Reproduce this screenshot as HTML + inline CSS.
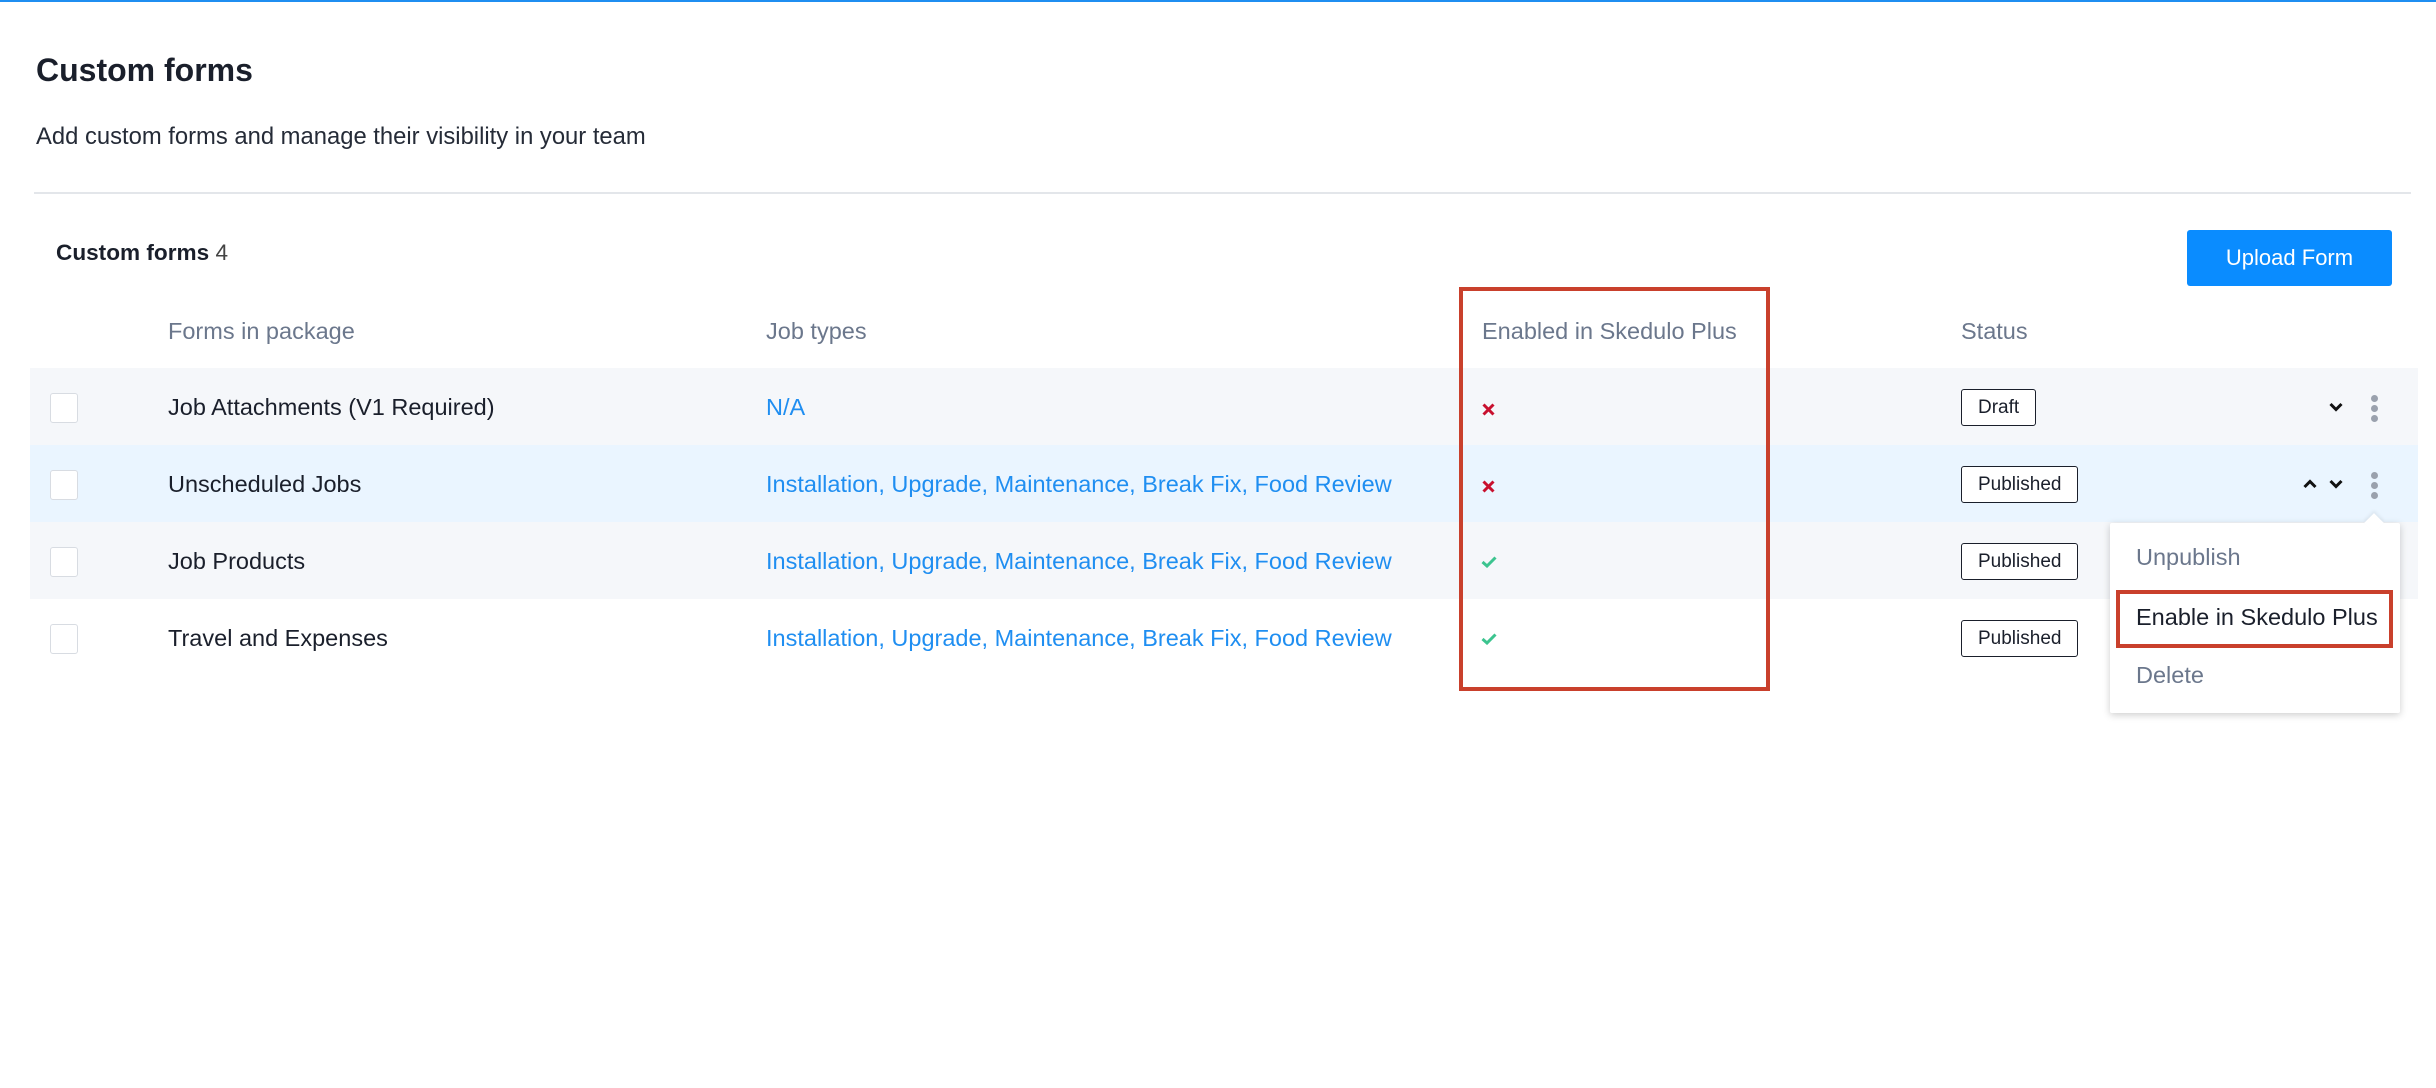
<!DOCTYPE html>
<html><head><meta charset="utf-8"><style>
*{margin:0;padding:0;box-sizing:border-box}
body{width:2436px;height:1088px;background:#fff;font-family:"Liberation Sans",sans-serif;position:relative;overflow:hidden;color:#1a1f2b}
.a{position:absolute;white-space:nowrap}
.row{position:absolute;left:30px;width:2388px;height:77px}
.cb{position:absolute;left:50px;width:28px;height:30px;border:1px solid #d8dce2;border-radius:3px;background:#fff}
.name{position:absolute;left:168px;font-size:23.5px;color:#1a1f2b}
.jt{position:absolute;left:766px;font-size:23.5px;color:#1f8ef1}
.hd{font-size:23.5px;color:#6b778c}
.badge{position:absolute;left:1961px;height:37px;border:1.5px solid #1a1f2b;border-radius:3px;font-size:19px;line-height:36px;padding:0 16px;background:#fff}
.dot{position:absolute;width:7px;height:7px;border-radius:50%;background:#9aa1ad}
</style></head><body>
<div class="a" style="left:0;top:0;width:2436px;height:2px;background:#1f8ef1"></div>
<div class="a" style="left:36px;top:52px;font-size:32px;font-weight:bold">Custom forms</div>
<div class="a" style="left:36px;top:123px;font-size:23.8px;color:#252b37">Add custom forms and manage their visibility in your team</div>
<div class="a" style="left:34px;top:192px;width:2377px;height:2px;background:#e3e6ea"></div>
<div class="a" style="left:56px;top:240px;font-size:22.6px"><b>Custom forms</b> <span style="color:#444">4</span></div>
<div class="a" style="left:2187px;top:230px;width:205px;height:56px;background:#0a8cff;border-radius:3px;color:#fff;font-size:22px;text-align:center;line-height:56px">Upload Form</div>
<div class="a hd" style="left:168px;top:318px">Forms in package</div>
<div class="a hd" style="left:766px;top:318px">Job types</div>
<div class="a hd" style="left:1482px;top:318px">Enabled in Skedulo Plus</div>
<div class="a hd" style="left:1961px;top:318px">Status</div>

<div class="row" style="top:368px;background:#f5f7fa"></div>
<div class="row" style="top:445px;background:#eaf5ff"></div>
<div class="row" style="top:522px;background:#f5f7fa"></div>

<div class="cb" style="top:393px"></div><div class="cb" style="top:470px"></div><div class="cb" style="top:547px"></div><div class="cb" style="top:624px"></div>
<div class="a name" style="top:394px">Job Attachments (V1 Required)</div>
<div class="a name" style="top:471px">Unscheduled Jobs</div>
<div class="a name" style="top:548px">Job Products</div>
<div class="a name" style="top:625px">Travel and Expenses</div>
<div class="a jt" style="top:394px">N/A</div>
<div class="a jt" style="top:471px">Installation, Upgrade, Maintenance, Break Fix, Food Review</div>
<div class="a jt" style="top:548px">Installation, Upgrade, Maintenance, Break Fix, Food Review</div>
<div class="a jt" style="top:625px">Installation, Upgrade, Maintenance, Break Fix, Food Review</div>

<svg class="a" style="left:1482px;top:403px" width="13" height="13"><path d="M1.5 1.5L11.5 11.5M11.5 1.5L1.5 11.5" stroke="#c8102e" stroke-width="3"/></svg>
<svg class="a" style="left:1482px;top:480px" width="13" height="13"><path d="M1.5 1.5L11.5 11.5M11.5 1.5L1.5 11.5" stroke="#c8102e" stroke-width="3"/></svg>
<svg class="a" style="left:1481px;top:556px" width="16" height="12"><path d="M1.5 6L6 10L14.5 1.5" stroke="#3cc48f" stroke-width="3" fill="none"/></svg>
<svg class="a" style="left:1481px;top:633px" width="16" height="12"><path d="M1.5 6L6 10L14.5 1.5" stroke="#3cc48f" stroke-width="3" fill="none"/></svg>

<div class="badge" style="top:389px">Draft</div>
<div class="badge" style="top:466px">Published</div>
<div class="badge" style="top:543px">Published</div>
<div class="badge" style="top:620px">Published</div>

<svg class="a" style="left:2329px;top:402px" width="14" height="10"><path d="M1.5 2L7 7.5L12.5 2" stroke="#111" stroke-width="3" fill="none"/></svg>
<svg class="a" style="left:2329px;top:479px" width="14" height="10"><path d="M1.5 2L7 7.5L12.5 2" stroke="#111" stroke-width="3" fill="none"/></svg>
<svg class="a" style="left:2303px;top:479px" width="14" height="10"><path d="M1.5 8L7 2.5L12.5 8" stroke="#111" stroke-width="3" fill="none"/></svg>
<div class="dot" style="left:2371px;top:395px"></div><div class="dot" style="left:2371px;top:405px"></div><div class="dot" style="left:2371px;top:415px"></div>
<div class="dot" style="left:2371px;top:472px"></div><div class="dot" style="left:2371px;top:482px"></div><div class="dot" style="left:2371px;top:492px"></div>

<div class="a" style="left:1459px;top:287px;width:311px;height:404px;border:4px solid #c9402c"></div>

<div class="a" style="left:2110px;top:523px;width:290px;height:190px;background:#fff;box-shadow:0 2px 8px rgba(0,0,0,.2);border-radius:2px"></div>
<div class="a" style="left:2367px;top:516px;width:14px;height:14px;background:#fff;transform:rotate(45deg);box-shadow:-2px -2px 3px rgba(0,0,0,.06)"></div>
<div class="a" style="left:2136px;top:544px;font-size:23.5px;color:#6b778c">Unpublish</div>
<div class="a" style="left:2116px;top:590px;width:277px;height:58px;border:4px solid #c9402c"></div>
<div class="a" style="left:2136px;top:604px;font-size:23.5px;color:#1a1f2b">Enable in Skedulo Plus</div>
<div class="a" style="left:2136px;top:662px;font-size:23.5px;color:#6b778c">Delete</div>
</body></html>
